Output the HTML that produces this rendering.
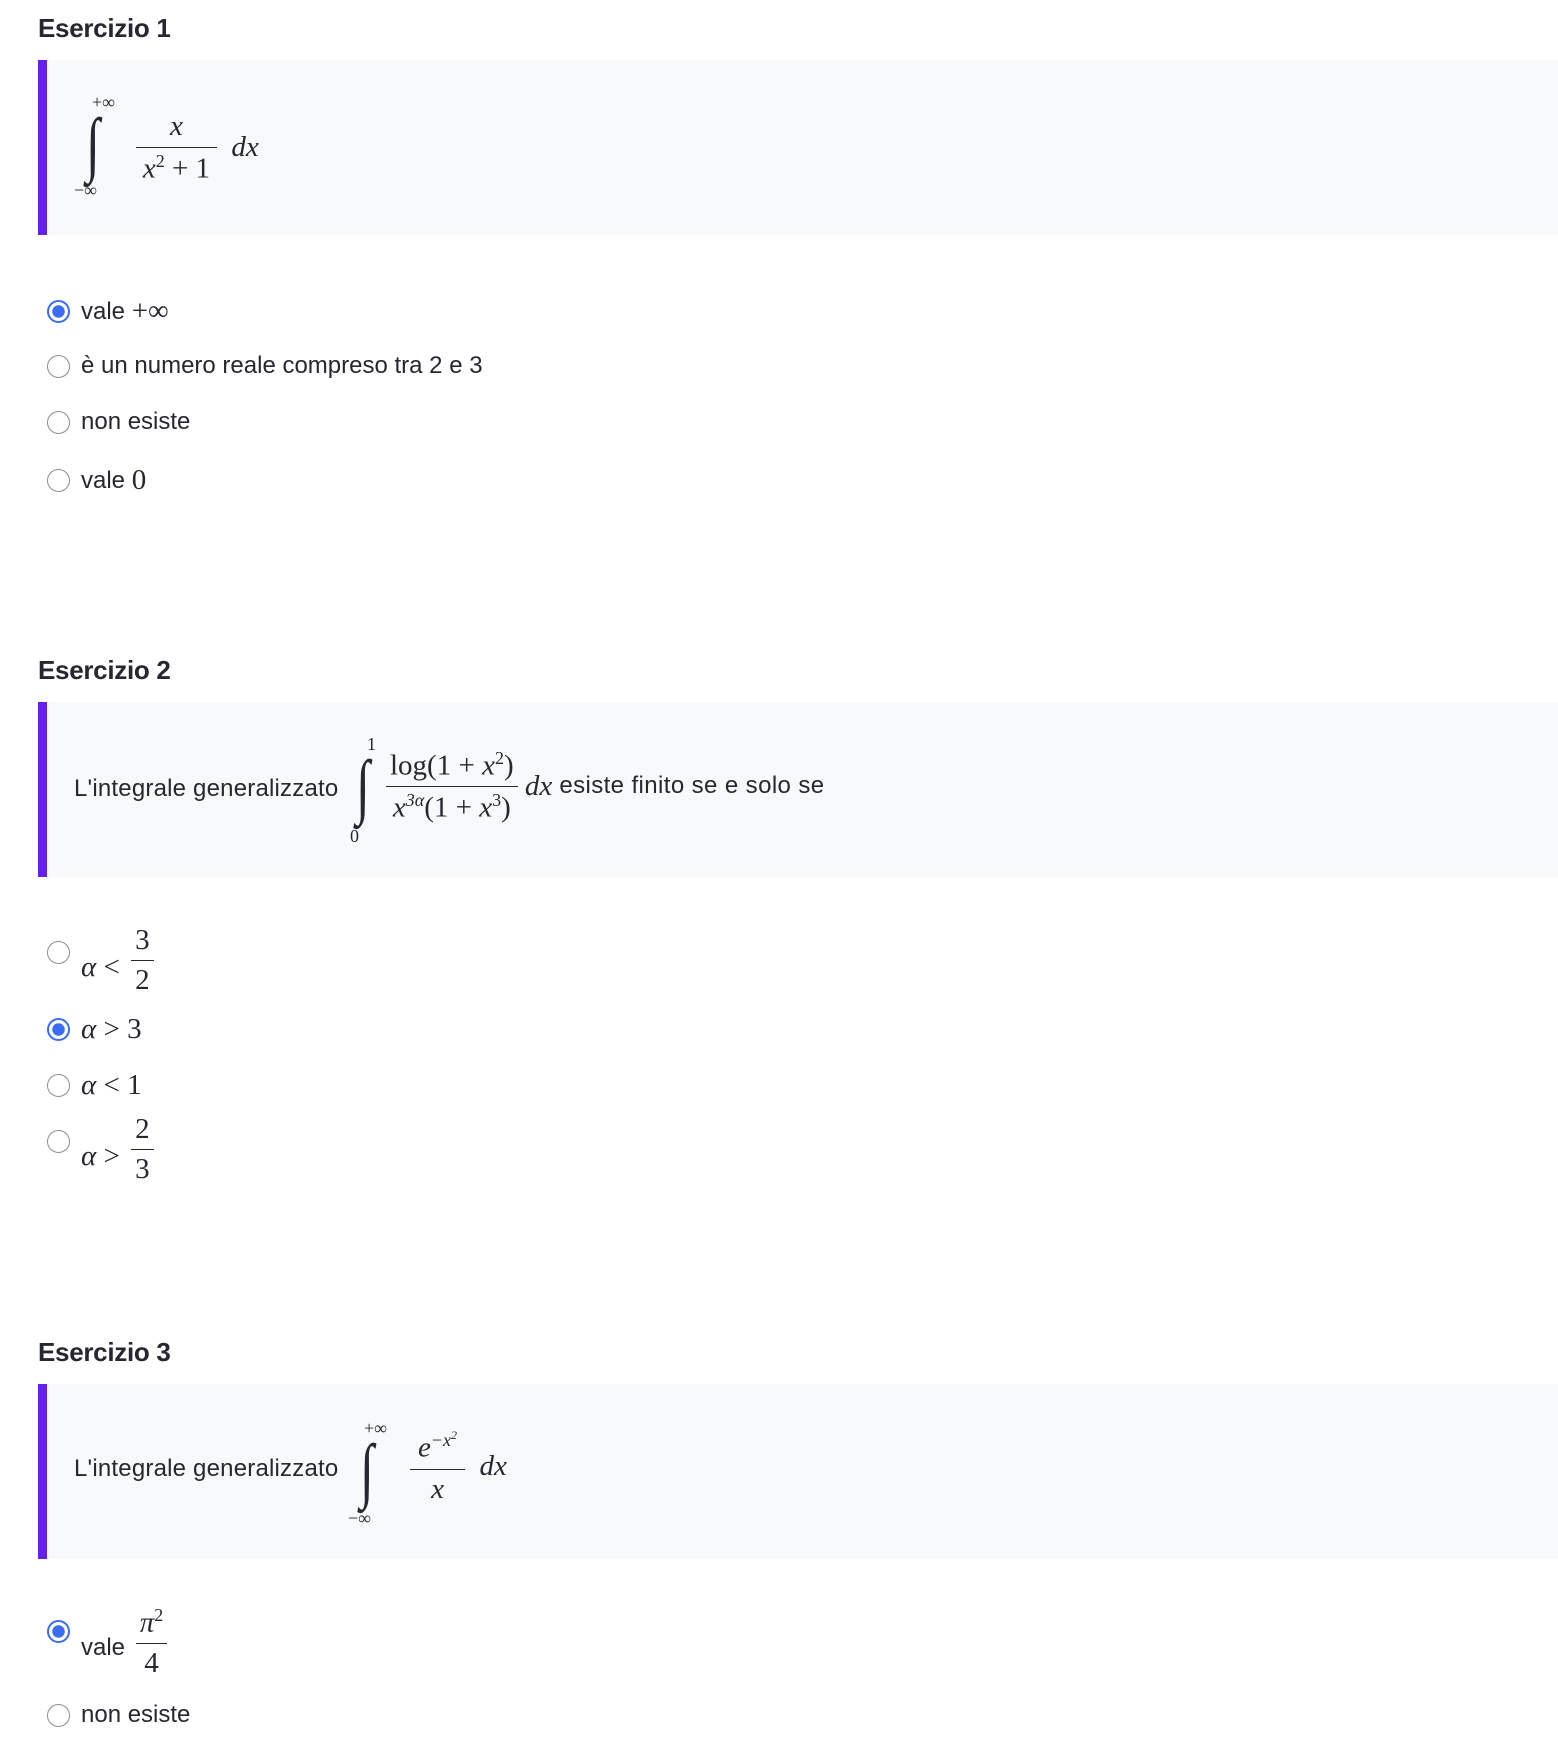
<!DOCTYPE html>
<html><head><meta charset="utf-8"><style>
body{margin:0;width:1558px;height:1758px;background:#fff;position:relative;overflow:hidden;font-family:"Liberation Sans",sans-serif;color:#262730}
.h{position:absolute;left:38px;font-weight:bold;font-size:26px;letter-spacing:-0.3px}
.box{position:absolute;left:38px;width:1520px;height:175px;background:#f8f9fa;border-left:9px solid #6320ee;box-sizing:border-box}
.m{font-family:"Liberation Serif",serif;font-size:29px}
.i{font-style:italic}
.row{position:absolute;left:47px;display:flex;align-items:center;font-size:24px}
.r{width:23px;height:23px;border:1.5px solid #8a8d96;border-radius:50%;box-sizing:border-box;margin-right:11px;flex:none;background:#fff}
.r.on{border:2px solid #3a6cf4;background:radial-gradient(circle,#3a6cf4 0 6px,#fff 6.5px)}
.fr{display:inline-flex;flex-direction:column;align-items:center;vertical-align:middle;margin:0 4px}
.fr .n{border-bottom:1.5px solid #262730;padding:0 4px 3px}
.fr .d{padding-top:3px}
.int{position:absolute;font-family:"Liberation Serif",serif}
.sg{position:absolute;font-family:"Liberation Serif",serif;font-style:italic;font-size:72px;transform:scaleX(0.7);transform-origin:left top;line-height:1}
sup{font-size:18px}
</style></head><body>

<div class="h" style="top:13px">Esercizio 1</div>
<div class="box" style="top:60px;height:175px"></div>
<div class="int" style="left:92px;top:92px;font-size:18px">+∞</div>
<div class="sg" style="left:86px;top:108px">∫</div>
<div class="int" style="left:74px;top:180px;font-size:18px">−∞</div>
<div class="m" style="position:absolute;left:136px;top:110px;display:flex;align-items:center"><span class="fr" style="margin:0"><span class="n i" style="padding:0 34px 4px">x</span><span class="d"><i>x</i><sup>2</sup> + 1</span></span>&nbsp;&nbsp;<i>dx</i></div>

<div class="row" style="top:295px"><span class="r on"></span>vale&nbsp;<span class="m">+∞</span></div>
<div class="row" style="top:352px"><span class="r"></span>è un numero reale compreso tra 2 e 3</div>
<div class="row" style="top:408px"><span class="r"></span>non esiste</div>
<div class="row" style="top:464px"><span class="r"></span>vale&nbsp;<span class="m">0</span></div>

<div class="h" style="top:655px">Esercizio 2</div>
<div class="box" style="top:702px"></div>
<div style="position:absolute;left:74px;top:775px;font-size:24px;letter-spacing:0.2px">L'integrale generalizzato</div>
<div class="int" style="left:367px;top:734px;font-size:18px">1</div>
<div class="sg" style="left:356px;top:750px">∫</div>
<div class="int" style="left:350px;top:826px;font-size:18px">0</div>
<div class="m" style="position:absolute;left:386px;top:748px;display:flex;align-items:center"><span class="fr" style="margin:0"><span class="n">log(1 + <i>x</i><sup>2</sup>)</span><span class="d"><i>x</i><sup><i>3α</i></sup>(1 + <i>x</i><sup>3</sup>)</span></span>&nbsp;<i>dx</i><span style="font-family:'Liberation Sans',sans-serif;font-size:24px;letter-spacing:0.4px">&nbsp;esiste finito se e solo se</span></div>

<div class="row" style="top:924px"><span class="r" style="margin-top:-16px"></span><span class="m" style="margin-top:14px"><i>α</i> &lt;&nbsp;</span><span class="m fr"><span class="n">3</span><span class="d">2</span></span></div>
<div class="row" style="top:1013px"><span class="r on"></span><span class="m"><i>α</i> &gt; 3</span></div>
<div class="row" style="top:1069px"><span class="r"></span><span class="m"><i>α</i> &lt; 1</span></div>
<div class="row" style="top:1113px"><span class="r" style="margin-top:-16px"></span><span class="m" style="margin-top:14px"><i>α</i> &gt;&nbsp;</span><span class="m fr"><span class="n">2</span><span class="d">3</span></span></div>

<div class="h" style="top:1337px">Esercizio 3</div>
<div class="box" style="top:1384px"></div>
<div style="position:absolute;left:74px;top:1455px;font-size:24px;letter-spacing:0.2px">L'integrale generalizzato</div>
<div class="int" style="left:364px;top:1418px;font-size:18px">+∞</div>
<div class="sg" style="left:360px;top:1434px">∫</div>
<div class="int" style="left:348px;top:1508px;font-size:18px">−∞</div>
<div class="m" style="position:absolute;left:410px;top:1428px;display:flex;align-items:center"><span class="fr" style="margin:0"><span class="n i" style="padding:0 8px 4px">e<sup>−x<sup style="font-size:12px">2</sup></sup></span><span class="d i">x</span></span>&nbsp;&nbsp;<i>dx</i></div>

<div class="row" style="top:1605px"><span class="r on" style="margin-top:-22px"></span><span style="margin-top:12px">vale</span>&nbsp;<span class="m fr"><span class="n"><i>π</i><sup>2</sup></span><span class="d">4</span></span></div>
<div class="row" style="top:1701px"><span class="r"></span>non esiste</div>

</body></html>
